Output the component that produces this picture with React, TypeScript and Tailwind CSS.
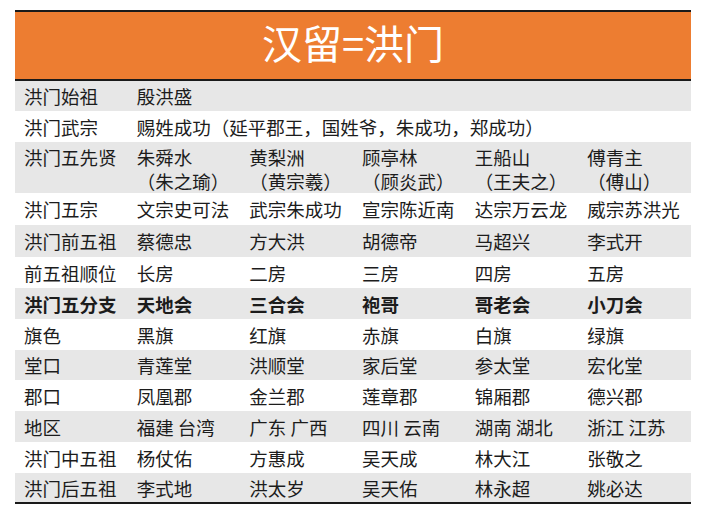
const rows: { cells: string[][]; bold?: boolean; tall?: boolean; span?: boolean; h: string }[] = [
  { cells: [["洪门始祖"], ["殷洪盛"]], h: "h-[30px]" },
  { cells: [["洪门武宗"], ["赐姓成功（延平郡王，国姓爷，朱成功，郑成功）"]], span: true, h: "h-[31px]" },
  {
    cells: [
      ["洪门五先贤"],
      ["朱舜水", "（朱之瑜）"],
      ["黄梨洲", "（黄宗羲）"],
      ["顾亭林", "（顾炎武）"],
      ["王船山", "（王夫之）"],
      ["傅青主", "（傅山）"],
    ],
    tall: true,
    h: "h-[51px]",
  },
  { cells: [["洪门五宗"], ["文宗史可法"], ["武宗朱成功"], ["宣宗陈近南"], ["达宗万云龙"], ["威宗苏洪光"]], h: "h-[32px]" },
  { cells: [["洪门前五祖"], ["蔡德忠"], ["方大洪"], ["胡德帝"], ["马超兴"], ["李式开"]], h: "h-[32px]" },
  { cells: [["前五祖顺位"], ["长房"], ["二房"], ["三房"], ["四房"], ["五房"]], h: "h-[31px]" },
  { cells: [["洪门五分支"], ["天地会"], ["三合会"], ["袍哥"], ["哥老会"], ["小刀会"]], bold: true, h: "h-[31px]" },
  { cells: [["旗色"], ["黑旗"], ["红旗"], ["赤旗"], ["白旗"], ["绿旗"]], h: "h-[31px]" },
  { cells: [["堂口"], ["青莲堂"], ["洪顺堂"], ["家后堂"], ["参太堂"], ["宏化堂"]], h: "h-[30px]" },
  { cells: [["郡口"], ["凤凰郡"], ["金兰郡"], ["莲章郡"], ["锦厢郡"], ["德兴郡"]], h: "h-[31px]" },
  { cells: [["地区"], ["福建 台湾"], ["广东 广西"], ["四川 云南"], ["湖南 湖北"], ["浙江 江苏"]], h: "h-[31px]" },
  { cells: [["洪门中五祖"], ["杨仗佑"], ["方惠成"], ["吴天成"], ["林大江"], ["张敬之"]], h: "h-[31px]" },
  { cells: [["洪门后五祖"], ["李式地"], ["洪太岁"], ["吴天佑"], ["林永超"], ["姚必达"]], h: "h-[29px]" },
];

const App = () => {
  return (
    <div
      className="h-[514px] w-[709px] bg-white pl-[15px] pt-[10px] text-[#1c1c1c]"
      style={{ fontFamily: '"Noto Sans CJK SC", "Noto Sans", sans-serif' }}
    >
      <div className="w-[676px]">
        {/* title bar */}
        <div className="flex h-[71px] items-start justify-center border-t-2 border-b-2 border-[#1a1a1a] bg-[#ed7d31] pt-[5px]">
          <span className="text-[40px] leading-[50px] text-white">汉留=洪门</span>
        </div>
        {rows.map((row, i) => (
          <div
            key={i}
            className={`grid grid-cols-6 ${row.h} ${i % 2 === 0 ? "bg-[#e7e7e7]" : "bg-white"} ${
              row.bold ? "font-bold" : ""
            } ${row.tall ? "items-start pt-[3px]" : "items-center"} text-[18.5px] leading-[24px]`}
          >
            {row.cells.map((lines, j) => (
              <div key={j} className={`px-[9px] whitespace-nowrap ${row.span && j === 1 ? "col-span-5" : ""}`}>
                {lines.map((l, k) => (
                  <div key={k}>{l}</div>
                ))}
              </div>
            ))}
          </div>
        ))}
        <div className="h-[2px] bg-[#1a1a1a]" />
      </div>
    </div>
  );
};

export default App;
